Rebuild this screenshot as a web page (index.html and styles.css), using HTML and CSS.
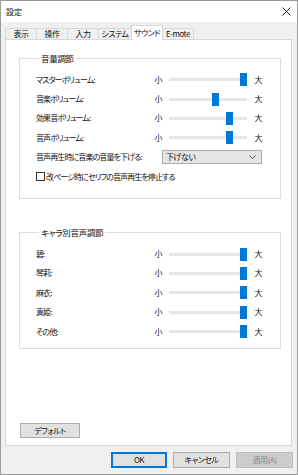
FILE: index.html
```html
<!DOCTYPE html>
<html lang="ja">
<head>
<meta charset="utf-8">
<title>設定</title>
<link rel="stylesheet" href="styles.css">
</head>
<body>
<div class="window">
  <div class="titlebar">
    <span class="title">設定</span>
    <svg class="close" width="9" height="9" viewBox="0 0 9 9"><path d="M0.5 0.5 L8.5 8.5 M8.5 0.5 L0.5 8.5" stroke="#222" stroke-width="1" fill="none"/></svg>
  </div>
  <div class="main">
    <div class="tabs">
      <div class="tab w31">表示</div>
      <div class="tab">操作</div>
      <div class="tab">入力</div>
      <div class="tab w33">システム</div>
      <div class="tab active">サウンド</div>
      <div class="tab">E-mote</div>
    </div>
    <div class="panel">
      <fieldset class="group g1">
        <legend>音量調節</legend>
        <div class="row">
          <span class="label">マスターボリューム:</span>
          <span class="mark">小</span>
          <span class="track"><span class="thumb" style="left:71px"></span></span>
          <span class="mark big">大</span>
        </div>
        <div class="row">
          <span class="label">音楽ボリューム:</span>
          <span class="mark">小</span>
          <span class="track"><span class="thumb" style="left:43px"></span></span>
          <span class="mark big">大</span>
        </div>
        <div class="row">
          <span class="label">効果音ボリューム:</span>
          <span class="mark">小</span>
          <span class="track"><span class="thumb" style="left:57px"></span></span>
          <span class="mark big">大</span>
        </div>
        <div class="row">
          <span class="label">音声ボリューム:</span>
          <span class="mark">小</span>
          <span class="track"><span class="thumb" style="left:57px"></span></span>
          <span class="mark big">大</span>
        </div>
        <div class="row">
          <span class="label">音声再生時に音楽の音量を下げる:</span>
          <div class="select">
            <span>下げない</span>
            <svg width="7" height="4" viewBox="0 0 7 4"><path d="M0.5 0.5 L3.5 3.5 L6.5 0.5" stroke="#555" stroke-width="1" fill="none"/></svg>
          </div>
        </div>
        <div class="row">
          <span class="checkbox"></span>
          <span class="label">改ページ時にセリフの音声再生を停止する</span>
        </div>
      </fieldset>

      <fieldset class="group g2">
        <legend>キャラ別音声調節</legend>
        <div class="row">
          <span class="label">碧:</span>
          <span class="mark">小</span>
          <span class="track"><span class="thumb" style="left:71px"></span></span>
          <span class="mark big">大</span>
        </div>
        <div class="row">
          <span class="label">琴莉:</span>
          <span class="mark">小</span>
          <span class="track"><span class="thumb" style="left:71px"></span></span>
          <span class="mark big">大</span>
        </div>
        <div class="row">
          <span class="label">麻衣:</span>
          <span class="mark">小</span>
          <span class="track"><span class="thumb" style="left:71px"></span></span>
          <span class="mark big">大</span>
        </div>
        <div class="row">
          <span class="label">真姫:</span>
          <span class="mark">小</span>
          <span class="track"><span class="thumb" style="left:71px"></span></span>
          <span class="mark big">大</span>
        </div>
        <div class="row">
          <span class="label">その他:</span>
          <span class="mark">小</span>
          <span class="track"><span class="thumb" style="left:71px"></span></span>
          <span class="mark big">大</span>
        </div>
      </fieldset>

      <div class="spacer"></div>
      <button class="btn default">デフォルト</button>
    </div>
  </div>
  <div class="footer">
    <button class="btn ok">OK</button>
    <button class="btn">キャンセル</button>
    <button class="btn disabled">適用(A)</button>
  </div>
</div>
</body>
</html>
```

FILE: styles.css
```css
* { box-sizing: border-box; }
html, body { margin: 0; padding: 0; }
body {
  width: 298px;
  height: 475px;
  font-family: "Noto Sans CJK JP", "Noto Sans", sans-serif;
  font-feature-settings: "palt";
  font-size: 8px;
  color: #111;
  background: #fff;
}
.window {
  width: 298px;
  height: 475px;
  border: 1px solid #9a9a9a;
  display: flex;
  flex-direction: column;
  background: #f0f0f0;
}
.titlebar {
  height: 21px;
  background: #fff;
  display: flex;
  align-items: center;
  justify-content: space-between;
  padding: 0 6px 0 5px;
  flex: none;
}
.title { font-size: 8px; line-height: 12px; }
.close { display: block; }

.main {
  flex: 1;
  display: flex;
  flex-direction: column;
  padding: 3px 5px 0 4px;
  min-height: 0;
}
.tabs {
  display: flex;
  align-items: flex-end;
  height: 14px;
  flex: none;
  position: relative;
  z-index: 1;
}
.tab {
  width: 32px;
  height: 11px;
  border: 1px solid #d9d9d9;
  border-bottom: none;
  margin-left: -1px;
  background: #f0f0f0;
  font-size: 8px;
  letter-spacing: -0.5px;
  line-height: 10px;
  text-align: center;
  white-space: nowrap;
}
.tab:first-child { margin-left: 0; }
.tab.w31 { width: 32px; }
.tab.w33 { width: 34px; }
.tab.active {
  height: 15px;
  margin-bottom: -1px;
  background: #fff;
  line-height: 13px;
}
.panel {
  flex: 1;
  background: #fff;
  border: 1px solid #d9d9d9;
  display: flex;
  flex-direction: column;
  padding: 12px 10px 7px 13px;
}
.group {
  margin: 0;
  border: 1px solid #dcdcdc;
  padding: 0 17px 0 16px;
  min-width: 0;
}
.group legend {
  margin-left: 3px;
  padding: 0 2px;
  font-size: 8.5px;
  letter-spacing: -0.3px;
  line-height: 12px;
}
.g1 { padding-top: 6px; padding-bottom: 12px; }
.g2 { margin-top: 27px; padding-top: 6px; padding-bottom: 7px; }

.row {
  height: 19.4px;
  display: flex;
  align-items: center;
}
.label {
  flex: 1;
  white-space: nowrap;
  line-height: 12px;
  letter-spacing: -0.9px;
}
.mark {
  width: 9px;
  text-align: center;
  line-height: 12px;
}
.mark.big { margin-left: 7px; }
.track {
  position: relative;
  width: 78px;
  height: 3px;
  margin-left: 6px;
  background: #e6e6e6;
}
.thumb {
  position: absolute;
  top: -5px;
  width: 7px;
  height: 13px;
  background: #0078d7;
}
.select {
  width: 100px;
  height: 14px;
  margin-right: 1px;
  background: #e5e5e5;
  border: 1px solid #acacac;
  display: flex;
  align-items: center;
  justify-content: space-between;
  padding: 0 5px 0 3px;
  line-height: 12px;
  letter-spacing: -0.5px;
}
.select svg { display: block; }
.checkbox {
  width: 9px;
  height: 9px;
  border: 1px solid #333;
  background: #fff;
  margin-right: 1px;
  flex: none;
}
.spacer { flex: 1; }
.btn {
  font-family: inherit;
  font-feature-settings: "palt";
  font-size: 8px;
  letter-spacing: -0.5px;
  color: #111;
  background: #e1e1e1;
  border: 1px solid #adadad;
  padding: 0;
  margin: 0;
  line-height: 12px;
}
.default {
  width: 60px;
  height: 15px;
  margin-left: 1px;
  align-self: flex-start;
}
.footer {
  flex: none;
  height: 28px;
  display: flex;
  justify-content: flex-end;
  align-items: flex-start;
  gap: 6px;
  padding: 6px 4px 0 0;
}
.footer .btn { width: 57px; height: 16px; }
.footer .ok { width: 56px; border-color: #0078d7; box-shadow: inset 0 0 0 1px #0078d7; }
.footer .disabled { background: #cccccc; border-color: #bfbfbf; color: #8a8a8a; }
```
